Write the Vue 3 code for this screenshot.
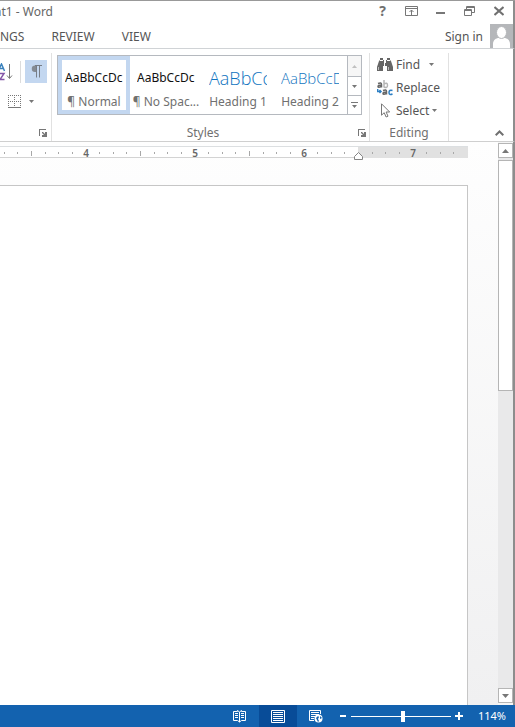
<template>
  <div class="window">
    <header class="titlebar">
      <h1 class="title">nt1 - Word</h1>
      <div class="window-buttons">
        <button class="icon-btn help" aria-label="Help">?</button>
        <button class="icon-btn" aria-label="Ribbon display options">
          <svg width="13" height="10" viewBox="0 0 13 10" fill="none" stroke="#777">
            <path d="M.5.5h12v9H.5zM.5 2.5h12M6.5 9V4M4.5 6l2-2 2 2" />
          </svg>
        </button>
        <button class="icon-btn" aria-label="Minimize">
          <svg width="10" height="10" viewBox="0 0 10 10"><path d="M0 6h9v2H0z" fill="#777" /></svg>
        </button>
        <button class="icon-btn" aria-label="Restore">
          <svg width="11" height="10" viewBox="0 0 11 10" fill="none" stroke="#777">
            <path d="M2.5 3V.5h8v6H8M2.5 1.5h8M.5 3.5h7v6h-7zM.5 4.5h7" />
          </svg>
        </button>
        <button class="icon-btn" aria-label="Close">
          <svg width="10" height="10" viewBox="0 0 10 10" stroke="#707070" stroke-width="2">
            <path d="M.5 1l9 8M9.5 1l-9 8" />
          </svg>
        </button>
      </div>
    </header>

    <nav class="tabs">
      <a href="#" class="tab">NGS</a>
      <a href="#" class="tab">REVIEW</a>
      <a href="#" class="tab">VIEW</a>
      <a href="#" class="sign-in">Sign in</a>
      <svg class="avatar" width="23" height="24" viewBox="0 0 23 24">
        <path d="M0 0h23v24H0z" fill="#b5b7ba" />
        <path d="M3 24v-4c0-4 3-6 6-6h5c3 0 6 2 6 6v4z" fill="#fff" />
        <ellipse cx="11.5" cy="8.5" rx="5" ry="6" fill="#fff" stroke="#b5b7ba" />
      </svg>
    </nav>

    <section class="ribbon">
      <div class="group paragraph">
        <div class="para-row">
          <button class="icon-btn" aria-label="Sort">
            <svg width="13" height="18" viewBox="0 0 13 18" fill="none">
              <path d="M-2 8L1.5 1l3 7M-1 5.500h5" stroke="#3b82bd" stroke-width="1.5" />
              <path d="M0 10.500h4L0 16.500h4.500" stroke="#8557a8" stroke-width="1.5" />
              <path d="M9.500 1v14M7 12.500l2.500 3 2.500-3" stroke="#777" />
            </svg>
          </button>
          <span class="divider"></span>
          <button class="icon-btn pilcrow" aria-label="Show paragraph marks">
            <svg width="11" height="13" viewBox="0 0 11 13" fill="none">
              <path d="M5.500.5V7H4A3.200 3.200 0 0 1 4 .5z" fill="#858b93" />
              <path d="M4 .5h7M5.500.5v12M8.500.5v12" stroke="#777d86" />
            </svg>
          </button>
        </div>
        <button class="icon-btn borders" aria-label="Borders">
          <svg width="13" height="13" viewBox="0 0 13 13" fill="none" stroke="#777">
            <path d="M.5 0v12M12.500 0v12M6.500 0v12M0 .5h13M0 6.500h13" stroke-dasharray="1 1" />
            <path d="M0 12.500h13" />
          </svg>
          <svg class="caret" width="5" height="3" viewBox="0 0 5 3"><path d="M0 0h5L2.500 3z" /></svg>
        </button>
        <footer class="group-label">
          <button class="icon-btn launcher" aria-label="Paragraph settings">
            <svg width="8" height="8" viewBox="0 0 8 8"><path :d="launcher" /></svg>
          </button>
        </footer>
      </div>

      <div class="group styles">
        <div class="gallery">
          <button v-for="style in styles" :key="style.name" class="style" :class="[style.kind, { selected: style.selected }]">
            <span class="sample">{{ style.sample }}</span>
            <span class="name">{{ style.name }}</span>
          </button>
          <div class="gallery-nav">
            <button class="icon-btn faded" aria-label="Previous styles">
              <svg width="5" height="3" viewBox="0 0 5 3"><path d="M0 3h5L2.500 0z" /></svg>
            </button>
            <button class="icon-btn" aria-label="Next styles">
              <svg width="5" height="3" viewBox="0 0 5 3"><path d="M0 0h5L2.500 3z" /></svg>
            </button>
            <button class="icon-btn" aria-label="More styles">
              <svg width="7" height="6" viewBox="0 0 7 6"><path d="M0 0h7v1H0zM1 3h5L3.500 6z" /></svg>
            </button>
          </div>
        </div>
        <footer class="group-label">
          Styles
          <button class="icon-btn launcher" aria-label="Style settings">
            <svg width="8" height="8" viewBox="0 0 8 8"><path :d="launcher" /></svg>
          </button>
        </footer>
      </div>

      <div class="group editing">
        <button class="command">
          <svg width="16" height="14" viewBox="0 0 16 14" fill="#666">
            <path d="M3 0h3v2h1v3h2V2h1V0h3v2l1 1 2 6v4h-6V8H6v5H0V9l2-6 1-1z" />
            <path d="M3 2.500h3M10 2.500h3M7.500 5v3" stroke="#fff" />
            <path d="M1.500 9v3M11.500 9v3" stroke="#bbb" />
          </svg>
          <span>Find</span>
          <svg class="caret wide" width="5" height="3" viewBox="0 0 5 3"><path d="M0 0h5L2.500 3z" /></svg>
        </button>
        <button class="command">
          <svg width="16" height="16" viewBox="0 0 16 16" fill="none" stroke-width="1.5">
            <path d="M1 3.500q3.500-1.500 3.500 1v3M4.500 5Q1 5 1 6.500t3.500 0" stroke="#666" />
            <path d="M7 0v7.500M7 4q3.500-2 3.500 1.300T7 7" stroke="#b5b5b5" />
            <path d="M6 10.500q3.500-1.500 3.500 1v3M9.500 12Q6 12 6 13.500t3.500 0" stroke="#666" />
            <path d="M15.500 10.500q-3.500-1-3.500 2t3.500 1.500M.7 9v2.500H4M2.500 10l1.500 1.500L2.500 13" stroke="#2c7fc4" />
          </svg>
          <span>Replace</span>
        </button>
        <button class="command">
          <svg width="16" height="15" viewBox="0 0 16 15" fill="none" stroke="#777">
            <path d="M4.500.8v11.400l2.700-2.500 1.900 4.300 1.900-.8-1.900-4.200h3.600z" />
          </svg>
          <span>Select</span>
          <svg class="caret" width="5" height="3" viewBox="0 0 5 3"><path d="M0 0h5L2.500 3z" /></svg>
        </button>
        <footer class="group-label">Editing</footer>
      </div>

      <button class="icon-btn collapse" aria-label="Collapse the ribbon">
        <svg width="9" height="6" viewBox="0 0 9 6" fill="none" stroke="#707070" stroke-width="2">
          <path d="M.7 5.200l3.800-3.700 3.800 3.700" />
        </svg>
      </button>
    </section>

    <main class="workspace">
      <div class="canvas">
        <div class="ruler">
          <svg class="ruler-scale" width="468" height="15" viewBox="0 0 468 15">
            <path d="M358 0h110v11H358z" fill="#e1e1e1" />
            <path v-for="tick in ticks" :key="tick.x" :d="`M${tick.x} ${tick.long ? 4 : 5}v${tick.long ? 5 : 2}`" stroke="#a8a8a8" />
            <text v-for="n in inches" :key="n.label" :x="n.x" y="10">{{ n.label }}</text>
            <path d="M354.500 12.500v-3l4-4 4 4v3z" fill="#fff" stroke="#858585" />
          </svg>
        </div>
        <article class="page"></article>
      </div>
      <div class="scrollbar">
        <button class="icon-btn scroll-btn" aria-label="Scroll up">
          <svg width="7" height="4" viewBox="0 0 7 4"><path d="M0 4h7L3.500 0z" /></svg>
        </button>
        <div class="track">
          <div class="thumb"></div>
        </div>
        <button class="icon-btn scroll-btn" aria-label="Scroll down">
          <svg width="7" height="4" viewBox="0 0 7 4"><path d="M0 0h7L3.500 4z" /></svg>
        </button>
      </div>
    </main>

    <footer class="statusbar">
      <button class="view-btn" aria-label="Read mode">
        <svg width="13" height="13" viewBox="0 0 13 13" fill="none" stroke="#fff">
          <path d="M6.500 2L4.500.5V1.500H.5v9h4L6.500 12l2-1.500h4v-9h-4V.5zM6.500 2v10M2 3.500h3M2 5.500h3M2 7.500h3M8 3.500h3M8 5.500h3M8 7.500h3" />
        </svg>
      </button>
      <button class="view-btn active" aria-label="Print layout">
        <svg width="14" height="13" viewBox="0 0 14 13" fill="none" stroke="#fff">
          <path d="M.5.5h13v12H.5zM2 2.500h10M2 4.500h10M2 6.500h10M2 8.500h10M2 10.500h10" />
        </svg>
      </button>
      <button class="view-btn" aria-label="Web layout">
        <svg width="14" height="13" viewBox="0 0 14 13" fill="none" stroke="#fff">
          <path d="M11.500 4V.5H.5v10H5M2 2.500h8M2 4.500h8M2 6.500h4M2 8.500h3" />
          <circle cx="9.5" cy="8.5" r="4" fill="#fff" stroke="none" />
          <path d="M7 8l2-2 1 1-1 2 1 2-1 1zM11 6l2 2-2 1z" fill="#1362af" stroke="none" />
        </svg>
      </button>
      <button class="zoom-btn" aria-label="Zoom out">
        <svg width="8" height="8" viewBox="0 0 8 8" fill="#fff"><path d="M1 3h6v2H1z" /></svg>
      </button>
      <input v-model="zoom" class="zoom-slider" type="range" min="10" max="210" aria-label="Zoom" />
      <button class="zoom-btn" aria-label="Zoom in">
        <svg width="8" height="8" viewBox="0 0 8 8" fill="#fff"><path d="M0 3h3V0h2v3h3v2H5v3H3V5H0z" /></svg>
      </button>
      <span class="zoom-value">{{ zoom }}%</span>
    </footer>
  </div>
</template>

<script setup>
import { ref } from 'vue'

const zoom = ref(114)

const launcher = 'M0 0h7v1H1v6H0zM3 3h1l2 2V3h2v5H3V6h2L3 4z'

const styles = [
  { name: '¶ Normal', sample: 'AaBbCcDc', kind: 'body', selected: true },
  { name: '¶ No Spac...', sample: 'AaBbCcDc', kind: 'body' },
  { name: 'Heading 1', sample: 'AaBbCc', kind: 'heading1' },
  { name: 'Heading 2', sample: 'AaBbCcD', kind: 'heading2' }
]

// one inch is 109px at this zoom level
const inch = 109
const inches = [4, 5, 6, 7].map((n) => ({ label: n, x: 86 + (n - 4) * inch }))

const ticks = []
for (let i = -6; i < 28; i++) {
  if (i % 8 === 0 || i === 20) continue
  ticks.push({ x: Math.floor(86 + (i * inch) / 8) + 0.5, long: i % 4 === 0 })
}
</script>

<style>
body {
  margin: 0;
}
</style>

<style scoped>
.window {
  box-sizing: border-box;
  display: flex;
  flex-direction: column;
  min-height: 100vh;
  overflow: hidden;
  border-top: 1px solid #999;
  background: #fff;
  color: #555;
  font-family: "Noto Sans", "Open Sans", sans-serif;
  font-size: 12px;
  line-height: 16px;
}

button {
  padding: 0;
  border: 0;
  background: none;
  color: inherit;
  font: inherit;
}

a {
  color: inherit;
  text-decoration: none;
}

svg {
  display: block;
  flex: none;
}

.icon-btn {
  display: flex;
  align-items: center;
  justify-content: center;
  fill: #777;
}

.titlebar,
.tabs,
.ribbon,
.workspace {
  border-right: 2px solid #8d8d8d;
}

.titlebar {
  display: flex;
  justify-content: space-between;
  height: 23px;
}

.title {
  margin: 3px 0 0 -6px;
  font-size: 12px;
  font-weight: 400;
  color: #666;
}

.window-buttons {
  display: flex;
  align-items: center;
  height: 20px;
}

.window-buttons .icon-btn {
  width: 29px;
  height: 20px;
}

.help {
  font-size: 14px;
  font-weight: 700;
  color: #707070;
}

.tabs {
  display: flex;
  align-items: center;
  gap: 27px;
  height: 24px;
  border-bottom: 1px solid #d0d3d6;
}

.tab,
.sign-in {
  padding-top: 1px;
}

.sign-in {
  margin-left: auto;
}

.avatar {
  margin-left: -20px;
}

.ribbon {
  display: flex;
  height: 92px;
  border-bottom: 1px solid #cfcfcf;
}

.group {
  box-sizing: border-box;
  display: flex;
  flex-direction: column;
  height: 88px;
  margin-top: 4px;
  border-right: 1px solid #e1e1e1;
}

.group-label {
  position: relative;
  height: 16px;
  margin-top: auto;
  text-align: center;
  color: #707070;
}

.launcher {
  position: absolute;
  right: 4px;
  bottom: 4px;
}

.paragraph {
  width: 52px;
}

.para-row {
  display: flex;
  align-items: center;
  margin-top: 7px;
}

.divider {
  width: 1px;
  height: 22px;
  margin: 0 4px 0 7px;
  background: #dcdcdc;
}

.pilcrow {
  width: 22px;
  height: 23px;
  background: #c3d7f0;
}

.borders {
  gap: 8px;
  align-self: flex-start;
  margin: 12px 0 0 8px;
}

.caret {
  fill: #777;
}

.styles {
  width: 318px;
  padding-left: 5px;
}

.gallery {
  box-sizing: border-box;
  display: flex;
  width: 305px;
  height: 60px;
  margin-top: 2px;
  border: 1px solid #b5b9bf;
}

.style {
  box-sizing: border-box;
  display: flex;
  flex-direction: column;
  align-items: center;
  width: 72px;
  height: 58px;
  padding: 12px 6px 0;
}

.style.selected {
  padding: 8px 2px 0;
  border: 4px solid #c3d7f0;
}

.sample {
  width: 58px;
  height: 20px;
  overflow: hidden;
  line-height: 20px;
  text-align: left;
  white-space: nowrap;
}

.body .sample {
  color: #111;
}

.heading1 .sample {
  font-family: "Open Sans", sans-serif;
  font-size: 18px;
  font-weight: 300;
  color: #0f74c0;
}

.heading2 .sample {
  font-family: "Open Sans", sans-serif;
  font-size: 15px;
  font-weight: 300;
  color: #0f74c0;
}

.name {
  margin-top: 6px;
  white-space: nowrap;
  color: #707070;
}

.gallery-nav {
  display: grid;
  grid-template-rows: 20px 19px 19px;
  width: 14px;
  margin-left: auto;
}

.gallery-nav .icon-btn {
  border-left: 1px solid #b5b9bf;
}

.gallery-nav .icon-btn + .icon-btn {
  border-top: 1px solid #b5b9bf;
}

.gallery-nav .faded {
  fill: #c0c0c0;
  background: #f6f6f6;
}

.styles .group-label {
  margin-right: 20px;
}

.styles .launcher {
  right: -17px;
}

.editing {
  width: 79px;
}

.command {
  display: flex;
  align-items: center;
  gap: 3px;
  height: 23px;
  padding-left: 7px;
}

.caret.wide {
  margin-left: 6px;
}

.collapse {
  align-self: flex-end;
  margin: 0 9px 5px auto;
}

.workspace {
  display: flex;
  flex: 1;
  background: linear-gradient(#fefefe, #f0f0f1);
}

.canvas {
  display: flex;
  flex: 1;
  flex-direction: column;
  padding: 4px 30px 0 0;
}

.ruler {
  height: 10px;
  border-top: 1px solid #dcdfe1;
  border-bottom: 1px solid #d3d3d3;
  background: #fff;
}

.ruler-scale {
  overflow: visible;
  font-size: 10px;
  font-weight: 600;
  fill: #666;
  text-anchor: middle;
}

.page {
  flex: 1;
  margin-top: 27px;
  border: solid #c6c6c6;
  border-width: 1px 1px 0 0;
  background: #fff;
}

.scrollbar {
  display: flex;
  flex-direction: column;
  width: 15px;
  padding: 1px 0 2px;
  background: #f5f5f5;
}

.scroll-btn {
  box-sizing: border-box;
  width: 15px;
  height: 15px;
  border: 1px solid #b5b5b5;
  background: #fff;
}

.track {
  flex: 1;
  padding: 2px 0;
  background: #e9e9ea;
}

.thumb {
  box-sizing: border-box;
  height: 44%;
  border: 1px solid #b5b5b5;
  background: #fff;
}

.statusbar {
  display: flex;
  align-items: center;
  justify-content: flex-end;
  height: 22px;
  padding-right: 9px;
  background: #1362af;
  color: #fff;
}

.view-btn {
  display: flex;
  align-items: center;
  justify-content: center;
  width: 38px;
  height: 22px;
}

.view-btn.active {
  background: #084c98;
}

.zoom-btn {
  margin: 0 4px;
}

.zoom-slider {
  width: 100px;
  height: 12px;
  margin: 0;
  appearance: none;
  background: linear-gradient(#fff, #fff) center / 100% 1px no-repeat;
}

.zoom-slider::-webkit-slider-thumb {
  appearance: none;
  width: 4px;
  height: 11px;
  background: #fff;
}

.zoom-value {
  margin-left: 11px;
  font-size: 11px;
}
</style>
